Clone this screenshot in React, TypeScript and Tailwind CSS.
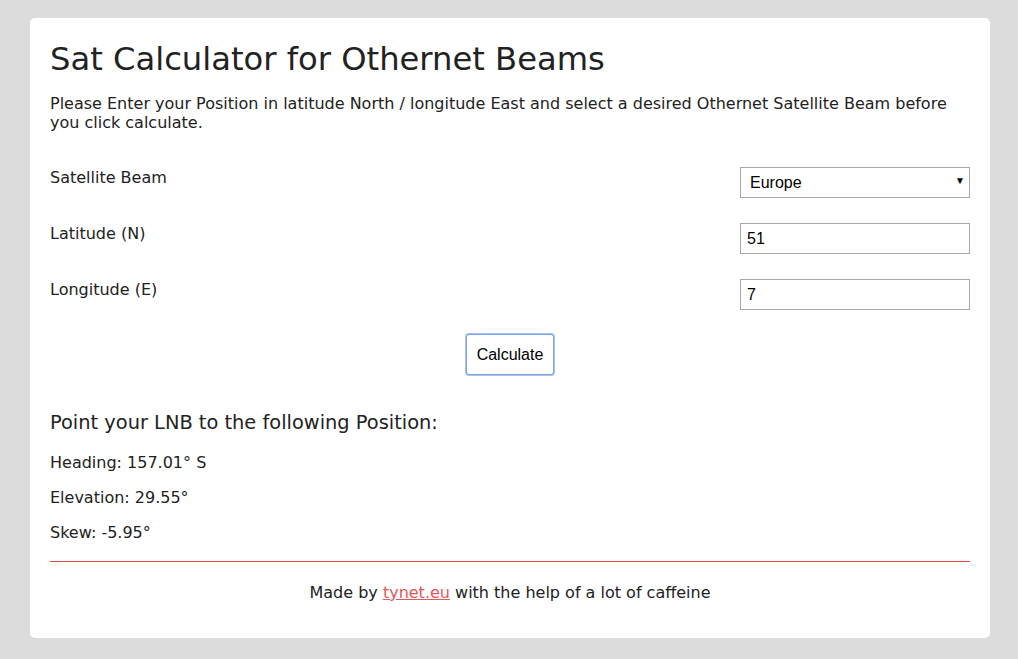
import { useState } from "react"

// Results shown under the form
const results = [
  { label: "Heading", value: "157.01° S" },
  { label: "Elevation", value: "29.55°" },
  { label: "Skew", value: "-5.95°" },
]

export default function App() {
  const [beam, setBeam] = useState("Europe")
  const [lat, setLat] = useState("51")
  const [lon, setLon] = useState("7")

  return (
    <div className="min-h-[659px] bg-[#dcdcdc] pl-[30px] pr-[28px] pt-[18px] pb-[22px] font-['DejaVu_Sans',Verdana,sans-serif] text-[#222]">
      <div className="bg-white rounded-[5px] px-5 pt-[20px] pb-[36px]">
        <h1 className="text-[32.2px] leading-[38px] mt-[2px] mb-[16px]">Sat Calculator for Othernet Beams</h1>
        <p className="text-[16px] leading-[19px] mb-[35px]">
          Please Enter your Position in latitude North / longitude East and select a desired Othernet Satellite Beam before you click calculate.
        </p>

        <div className="flex flex-col gap-[25px]">
          <div className="flex items-start justify-between">
            <label className="text-[16px] leading-[19px] pt-[1px]">Satellite Beam</label>
            <div className="relative w-[230px] h-[31px]">
              <select
                value={beam}
                onChange={(e) => setBeam(e.target.value)}
                className="appearance-none w-full h-full border border-[#a9a9a9] bg-white pl-[9px] text-[16px] font-['Liberation_Sans',Arial,sans-serif] text-black outline-none"
              >
                <option>Europe</option>
                <option>North America</option>
                <option>Asia</option>
              </select>
              <span className="absolute right-[5px] top-[6px] text-[10px] text-black pointer-events-none font-['Liberation_Sans',Arial,sans-serif]">▼</span>
            </div>
          </div>
          <div className="flex items-start justify-between">
            <label className="text-[16px] leading-[19px] pt-[1px]">Latitude (N)</label>
            <input
              value={lat}
              onChange={(e) => setLat(e.target.value)}
              className="w-[230px] h-[31px] border border-[#a9a9a9] px-[6px] text-[16px] font-['Liberation_Sans',Arial,sans-serif] text-black outline-none"
            />
          </div>
          <div className="flex items-start justify-between">
            <label className="text-[16px] leading-[19px] pt-[1px]">Longitude (E)</label>
            <input
              value={lon}
              onChange={(e) => setLon(e.target.value)}
              className="w-[230px] h-[31px] border border-[#a9a9a9] px-[6px] text-[16px] font-['Liberation_Sans',Arial,sans-serif] text-black outline-none"
            />
          </div>
        </div>

        <div className="flex justify-center mt-[24px]">
          <button className="w-[88px] h-[41px] border border-[#7aa3e5] shadow-[0_0_0_1px_#a8c3f0] rounded-[3px] bg-white text-[16px] font-['Liberation_Sans',Arial,sans-serif] text-black">
            Calculate
          </button>
        </div>

        <h2 className="text-[19.4px] leading-[24px] mt-[36px] mb-[18px]">Point your LNB to the following Position:</h2>
        <div className="flex flex-col gap-[16px]">
          {results.map((r) => (
            <p key={r.label} className="text-[16px] leading-[19px]">
              {r.label}: {r.value}
            </p>
          ))}
        </div>

        <hr className="border-0 h-px bg-[#e0493c] mt-[19px]" />
        <p className="text-[16px] leading-[19px] text-center mt-[21px]">
          Made by <a href="#" className="text-[#e3575a] underline">tynet.eu</a> with the help of a lot of caffeine
        </p>
      </div>
    </div>
  )
}
